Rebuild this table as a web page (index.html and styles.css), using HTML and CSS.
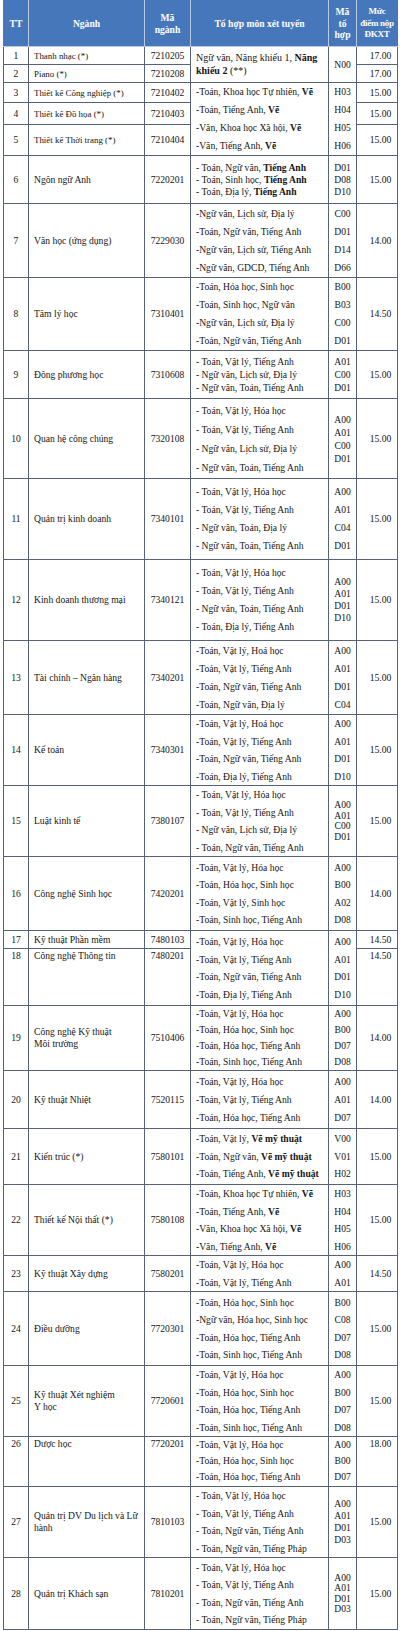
FILE: index.html
```html
<!DOCTYPE html>
<html lang="vi">
<head>
<meta charset="utf-8">
<title>Ngành tuyển sinh</title>
<link rel="stylesheet" href="styles.css">
</head>
<body>
<table class="tbl">
<colgroup>
<col class="w-tt"><col class="w-name"><col class="w-code"><col class="w-subj"><col class="w-grp"><col class="w-score">
</colgroup>
<thead>
<tr class="hd">
<th>TT</th>
<th>Ngành</th>
<th>Mã<br>ngành</th>
<th>Tổ hợp môn xét tuyển</th>
<th>Mã<br>tổ<br>hợp</th>
<th class="nw">Mức<br>điểm nộp<br>ĐKXT</th>
</tr>
</thead>
<tbody>
<tr class="h18">
<td class="tt">1</td><td class="name sm">Thanh nhạc (*)</td><td class="code">7210205</td>
<td class="subj big" rowspan="2"><div>Ngữ văn, Năng khiếu 1, <b>Năng</b></div><div><b>khiếu 2</b> (**)</div></td>
<td class="grp" rowspan="2">N00</td><td class="score">17.00</td>
</tr>
<tr class="h18">
<td class="tt">2</td><td class="name sm">Piano (*)</td><td class="code">7210208</td><td class="score">17.00</td>
</tr>
<tr class="h20">
<td class="tt">3</td><td class="name sm">Thiết kế Công nghiệp (*)</td><td class="code">7210402</td>
<td class="subj lh18" rowspan="3"><div>-Toán, Khoa học Tự nhiên, <b>Vẽ</b></div><div>-Toán, Tiếng Anh, <b>Vẽ</b></div><div>-Văn, Khoa học Xã hội, <b>Vẽ</b></div><div>-Văn, Tiếng Anh, <b>Vẽ</b></div></td>
<td class="grp lh18" rowspan="3"><div>H03</div><div>H04</div><div>H05</div><div>H06</div></td>
<td class="score">15.00</td>
</tr>
<tr class="h22">
<td class="tt">4</td><td class="name sm">Thiết kế Đồ họa (*)</td><td class="code">7210403</td><td class="score">15.00</td>
</tr>
<tr class="h31">
<td class="tt">5</td><td class="name sm">Thiết kế Thời trang (*)</td><td class="code">7210404</td><td class="score">15.00</td>
</tr>
<tr class="h48">
<td class="tt">6</td><td class="name">Ngôn ngữ Anh</td><td class="code">7220201</td>
<td class="subj lh12"><div>- Toán, Ngữ văn, <b>Tiếng Anh</b></div><div>- Toán, Sinh học, <b>Tiếng Anh</b></div><div>- Toán, Địa lý, <b>Tiếng Anh</b></div></td>
<td class="grp lh12"><div>D01</div><div>D08</div><div>D10</div></td>
<td class="score">15.00</td>
</tr>
<tr class="h74">
<td class="tt">7</td><td class="name">Văn học (ứng dụng)</td><td class="code">7229030</td>
<td class="subj lh18"><div>-Ngữ văn, Lịch sử, Địa lý</div><div>-Toán, Ngữ văn, Tiếng Anh</div><div>-Ngữ văn, Lịch sử, Tiếng Anh</div><div>-Ngữ văn, GDCD, Tiếng Anh</div></td>
<td class="grp lh18"><div>C00</div><div>D01</div><div>D14</div><div>D66</div></td>
<td class="score">14.00</td>
</tr>
<tr class="h72">
<td class="tt">8</td><td class="name">Tâm lý học</td><td class="code">7310401</td>
<td class="subj lh18"><div>-Toán, Hóa học, Sinh học</div><div>-Toán, Sinh học, Ngữ văn</div><div>-Ngữ văn, Lịch sử, Địa lý</div><div>-Toán, Ngữ văn, Tiếng Anh</div></td>
<td class="grp lh18"><div>B00</div><div>B03</div><div>C00</div><div>D01</div></td>
<td class="score">14.50</td>
</tr>
<tr class="h48">
<td class="tt">9</td><td class="name">Đông phương học</td><td class="code">7310608</td>
<td class="subj lh13"><div>- Toán, Vật lý, Tiếng Anh</div><div>- Ngữ văn, Lịch sử, Địa lý</div><div>- Ngữ văn, Toán, Tiếng Anh</div></td>
<td class="grp lh13"><div>A01</div><div>C00</div><div>D01</div></td>
<td class="score">15.00</td>
</tr>
<tr class="h80">
<td class="tt">10</td><td class="name">Quan hệ công chúng</td><td class="code">7320108</td>
<td class="subj lh19"><div>- Toán, Vật lý, Hóa học</div><div>- Toán, Vật lý, Tiếng Anh</div><div>- Ngữ văn, Lịch sử, Địa lý</div><div>- Ngữ văn, Toán, Tiếng Anh</div></td>
<td class="grp lh13"><div>A00</div><div>A01</div><div>C00</div><div>D01</div></td>
<td class="score">15.00</td>
</tr>
<tr class="h81">
<td class="tt">11</td><td class="name">Quản trị kinh doanh</td><td class="code">7340101</td>
<td class="subj lh18"><div>- Toán, Vật lý, Hóa học</div><div>- Toán, Vật lý, Tiếng Anh</div><div>- Ngữ văn, Toán, Địa lý</div><div>- Ngữ văn, Toán, Tiếng Anh</div></td>
<td class="grp lh18"><div>A00</div><div>A01</div><div>C04</div><div>D01</div></td>
<td class="score">15.00</td>
</tr>
<tr class="h81">
<td class="tt">12</td><td class="name">Kinh doanh thương mại</td><td class="code">7340121</td>
<td class="subj lh18"><div>- Toán, Vật lý, Hóa học</div><div>- Toán, Vật lý, Tiếng Anh</div><div>- Ngữ văn, Toán, Tiếng Anh</div><div>- Toán, Địa lý, Tiếng Anh</div></td>
<td class="grp lh12"><div>A00</div><div>A01</div><div>D01</div><div>D10</div></td>
<td class="score">15.00</td>
</tr>
<tr class="h74">
<td class="tt">13</td><td class="name">Tài chính – Ngân hàng</td><td class="code">7340201</td>
<td class="subj lh18"><div>-Toán, Vật lý, Hoá học</div><div>-Toán, Vật lý, Tiếng Anh</div><div>-Toán, Ngữ văn, Tiếng Anh</div><div>-Toán, Ngữ văn, Địa lý</div></td>
<td class="grp lh18"><div>A00</div><div>A01</div><div>D01</div><div>C04</div></td>
<td class="score">15.00</td>
</tr>
<tr class="h70">
<td class="tt">14</td><td class="name">Kế toán</td><td class="code">7340301</td>
<td class="subj lh17"><div>-Toán, Vật lý, Hoá học</div><div>-Toán, Vật lý, Tiếng Anh</div><div>-Toán, Ngữ văn, Tiếng Anh</div><div>-Toán, Địa lý, Tiếng Anh</div></td>
<td class="grp lh17"><div>A00</div><div>A01</div><div>D01</div><div>D10</div></td>
<td class="score">15.00</td>
</tr>
<tr class="h71">
<td class="tt">15</td><td class="name">Luật kinh tế</td><td class="code">7380107</td>
<td class="subj lh17"><div>- Toán, Vật lý, Hóa học</div><div>- Toán, Vật lý, Tiếng Anh</div><div>- Ngữ văn, Lịch sử, Địa lý</div><div>- Toán, Ngữ văn, Tiếng Anh</div></td>
<td class="grp lh11"><div>A00</div><div>A01</div><div>C00</div><div>D01</div></td>
<td class="score">15.00</td>
</tr>
<tr class="h74">
<td class="tt">16</td><td class="name">Công nghệ Sinh học</td><td class="code">7420201</td>
<td class="subj lh17"><div>-Toán, Vật lý, Hóa học</div><div>-Toán, Hóa học, Sinh học</div><div>-Toán, Vật lý, Sinh học</div><div>-Toán, Sinh học, Tiếng Anh</div></td>
<td class="grp lh17"><div>A00</div><div>B00</div><div>A02</div><div>D08</div></td>
<td class="score">14.00</td>
</tr>
<tr class="h18">
<td class="tt">17</td><td class="name">Kỹ thuật Phần mềm</td><td class="code">7480103</td>
<td class="subj lh17" rowspan="2"><div>-Toán, Vật lý, Hóa học</div><div>-Toán, Vật lý, Tiếng Anh</div><div>-Toán, Ngữ văn, Tiếng Anh</div><div>-Toán, Địa lý, Tiếng Anh</div></td>
<td class="grp lh17" rowspan="2"><div>A00</div><div>A01</div><div>D01</div><div>D10</div></td>
<td class="score">14.50</td>
</tr>
<tr class="h57 top">
<td class="tt">18</td><td class="name">Công nghệ Thông tin</td><td class="code">7480201</td><td class="score">14.50</td>
</tr>
<tr class="h65">
<td class="tt">19</td><td class="name">Công nghệ Kỹ thuật<br>Môi trường</td><td class="code">7510406</td>
<td class="subj lh16"><div>-Toán, Vật lý, Hóa học</div><div>-Toán, Hóa học, Sinh học</div><div>-Toán, Hóa học, Tiếng Anh</div><div>-Toán, Sinh học, Tiếng Anh</div></td>
<td class="grp lh16"><div>A00</div><div>B00</div><div>D07</div><div>D08</div></td>
<td class="score">14.00</td>
</tr>
<tr class="h58">
<td class="tt">20</td><td class="name">Kỹ thuật Nhiệt</td><td class="code">7520115</td>
<td class="subj lh18"><div>-Toán, Vật lý, Hóa học</div><div>-Toán, Vật lý, Tiếng Anh</div><div>-Toán, Hóa học, Tiếng Anh</div></td>
<td class="grp lh18"><div>A00</div><div>A01</div><div>D07</div></td>
<td class="score">14.00</td>
</tr>
<tr class="h56">
<td class="tt">21</td><td class="name">Kiến trúc (*)</td><td class="code">7580101</td>
<td class="subj lh17"><div>-Toán, Vật lý, <b>Vẽ mỹ thuật</b></div><div>-Toán, Ngữ văn, <b>Vẽ mỹ thuật</b></div><div>-Toán, Tiếng Anh, <b>Vẽ mỹ thuật</b></div></td>
<td class="grp lh17"><div>V00</div><div>V01</div><div>H02</div></td>
<td class="score">15.00</td>
</tr>
<tr class="h71">
<td class="tt">22</td><td class="name">Thiết kế Nội thất (*)</td><td class="code">7580108</td>
<td class="subj lh17"><div>-Toán, Khoa học Tự nhiên, <b>Vẽ</b></div><div>-Toán, Tiếng Anh, <b>Vẽ</b></div><div>-Văn, Khoa học Xã hội, <b>Vẽ</b></div><div>-Văn, Tiếng Anh, <b>Vẽ</b></div></td>
<td class="grp lh17"><div>H03</div><div>H04</div><div>H05</div><div>H06</div></td>
<td class="score">15.00</td>
</tr>
<tr class="h35">
<td class="tt">23</td><td class="name">Kỹ thuật Xây dựng</td><td class="code">7580201</td>
<td class="subj lh17"><div>-Toán, Vật lý, Hóa học</div><div>-Toán, Vật lý, Tiếng Anh</div></td>
<td class="grp lh17"><div>A00</div><div>A01</div></td>
<td class="score">14.50</td>
</tr>
<tr class="h74">
<td class="tt">24</td><td class="name">Điều dưỡng</td><td class="code">7720301</td>
<td class="subj lh17"><div>-Toán, Hóa học, Sinh học</div><div>-Ngữ văn, Hóa học, Sinh học</div><div>-Toán, Hóa học, Tiếng Anh</div><div>-Toán, Sinh học, Tiếng Anh</div></td>
<td class="grp lh17"><div>B00</div><div>C08</div><div>D07</div><div>D08</div></td>
<td class="score">15.00</td>
</tr>
<tr class="h71">
<td class="tt">25</td><td class="name">Kỹ thuật Xét nghiệm<br>Y học</td><td class="code">7720601</td>
<td class="subj lh17"><div>-Toán, Vật lý, Hóa học</div><div>-Toán, Hóa học, Sinh học</div><div>-Toán, Hóa học, Tiếng Anh</div><div>-Toán, Sinh học, Tiếng Anh</div></td>
<td class="grp lh17"><div>A00</div><div>B00</div><div>D07</div><div>D08</div></td>
<td class="score">15.00</td>
</tr>
<tr class="h50 top">
<td class="tt">26</td><td class="name">Dược học</td><td class="code">7720201</td>
<td class="subj lh16"><div>-Toán, Vật lý, Hóa học</div><div>-Toán, Hóa học, Sinh học</div><div>-Toán, Hóa học, Tiếng Anh</div></td>
<td class="grp lh16"><div>A00</div><div>B00</div><div>D07</div></td>
<td class="score">18.00</td>
</tr>
<tr class="h70">
<td class="tt">27</td><td class="name">Quản trị DV Du lịch và Lữ<br>hành</td><td class="code">7810103</td>
<td class="subj lh17"><div>- Toán, Vật lý, Hóa học</div><div>- Toán, Vật lý, Tiếng Anh</div><div>- Toán, Ngữ văn, Tiếng Anh</div><div>- Toán, Ngữ văn, Tiếng Pháp</div></td>
<td class="grp lh12"><div>A00</div><div>A01</div><div>D01</div><div>D03</div></td>
<td class="score">15.00</td>
</tr>
<tr class="h72">
<td class="tt">28</td><td class="name">Quản trị Khách sạn</td><td class="code">7810201</td>
<td class="subj lh17"><div>- Toán, Vật lý, Hóa học</div><div>- Toán, Vật lý, Tiếng Anh</div><div>- Toán, Ngữ văn, Tiếng Anh</div><div>- Toán, Ngữ văn, Tiếng Pháp</div></td>
<td class="grp lh11"><div>A00</div><div>A01</div><div>D01</div><div>D03</div></td>
<td class="score">15.00</td>
</tr>
</tbody>
</table>
</body>
</html>
```
FILE: styles.css
```css
html, body {
  margin: 0;
  padding: 0;
  background: #ffffff;
}
body {
  padding: 0 3px;
  font-family: "Liberation Serif", "Times New Roman", serif;
  color: #151515;
}
.tbl {
  border-collapse: collapse;
  table-layout: fixed;
  width: 394px;
  font-size: 9.6px;
  line-height: 12px;
}
.w-tt { width: 25px; }
.w-name { width: 116px; }
.w-code { width: 46px; }
.w-subj { width: 138px; }
.w-grp { width: 28px; }
.w-score { width: 41px; }

.hd {
  height: 46px;
  background: #4677bb;
}
.hd th {
  color: #ffffff;
  font-weight: bold;
  font-size: 9.6px;
  line-height: 11.5px;
  text-align: center;
  vertical-align: middle;
  padding: 0 1px;
  border: 1px solid #b9c9e2;
  border-top-color: #4677bb;
}
.hd th.nw {
  white-space: nowrap;
  padding: 0;
  font-size: 9px;
  letter-spacing: -0.3px;
}
.hd th:first-child { border-left-color: #4677bb; }
.hd th:last-child { border-right-color: #4677bb; }

.tbl td {
  border: 1px solid #56627a;
  padding: 0 4px;
  vertical-align: middle;
}
.tbl td.tt { text-align: center; padding: 0; }
.tbl td.name { text-align: left; padding-left: 5px; }
.tbl td.name.sm { font-size: 8.9px; }
.tbl td.code { text-align: center; padding: 0; }
.tbl td.subj { text-align: left; padding: 0 2px 0 5px; white-space: nowrap; }
.tbl td.subj.big { font-size: 10px; line-height: 12.5px; }
.tbl td.grp { text-align: center; padding: 0; }
.tbl td.score { text-align: center; padding: 0 0 0 7px; }

.top td.tt, .top td.name, .top td.code, .top td.score {
  vertical-align: top;
  padding-top: 1px;
}
.top td.subj, .top td.grp { vertical-align: top; padding-top: 0; }

.lh11 { line-height: 10.5px; }
.lh12 { line-height: 12px; }
.lh13 { line-height: 13px; }
.lh16 { line-height: 16px; }
.lh17 { line-height: 17.5px; }
.lh18 { line-height: 18px; }
.lh19 { line-height: 19px; }

.h18 { height: 18px; }
.h20 { height: 20px; }
.h22 { height: 22px; }
.h31 { height: 31px; }
.h35 { height: 35px; }
.h48 { height: 48px; }
.h50 { height: 50px; }
.h56 { height: 56px; }
.h57 { height: 57px; }
.h58 { height: 58px; }
.h65 { height: 65px; }
.h70 { height: 70px; }
.h71 { height: 71px; }
.h72 { height: 72px; }
.h74 { height: 74px; }
.h80 { height: 80px; }
.h81 { height: 81px; }
```
